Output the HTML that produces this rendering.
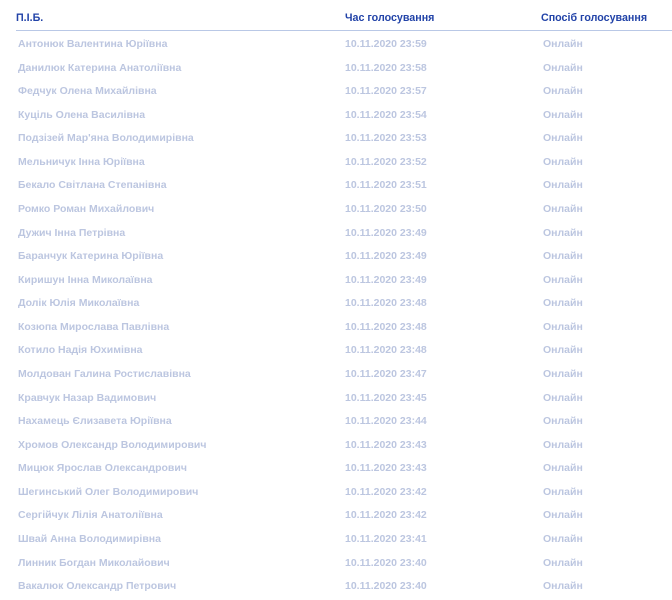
<!DOCTYPE html><html><head><meta charset="utf-8"><style>
body{margin:0;width:672px;height:600px;background:#fff;font-family:"Liberation Sans",sans-serif;font-weight:bold;font-size:10.5px;position:relative;overflow:hidden}
.h{position:absolute;top:12px;color:#2243a8;font-size:10.7px}
.line{position:absolute;left:16px;right:0;top:30px;height:1px;background:#b9c8e6}
.r{position:absolute;left:0;width:672px;height:14px;color:#bcc6e0}
.r span{position:absolute;top:0}
.a{left:18px}.b{left:345px}.c{left:543px}
</style></head><body>
<div class="h" style="left:16px">П.І.Б.</div>
<div class="h" style="left:345px">Час голосування</div>
<div class="h" style="left:541px">Спосіб голосування</div>
<div class="line"></div>
<div class="r" style="top:38px"><span class="a">Антонюк Валентина Юріївна</span><span class="b">10.11.2020 23:59</span><span class="c">Онлайн</span></div>
<div class="r" style="top:61.6px"><span class="a">Данилюк Катерина Анатоліївна</span><span class="b">10.11.2020 23:58</span><span class="c">Онлайн</span></div>
<div class="r" style="top:85.1px"><span class="a">Федчук Олена Михайлівна</span><span class="b">10.11.2020 23:57</span><span class="c">Онлайн</span></div>
<div class="r" style="top:108.7px"><span class="a">Куціль Олена Василівна</span><span class="b">10.11.2020 23:54</span><span class="c">Онлайн</span></div>
<div class="r" style="top:132.3px"><span class="a">Подзізей Мар'яна Володимирівна</span><span class="b">10.11.2020 23:53</span><span class="c">Онлайн</span></div>
<div class="r" style="top:155.8px"><span class="a">Мельничук Інна Юріївна</span><span class="b">10.11.2020 23:52</span><span class="c">Онлайн</span></div>
<div class="r" style="top:179.4px"><span class="a">Бекало Світлана Степанівна</span><span class="b">10.11.2020 23:51</span><span class="c">Онлайн</span></div>
<div class="r" style="top:203px"><span class="a">Ромко Роман Михайлович</span><span class="b">10.11.2020 23:50</span><span class="c">Онлайн</span></div>
<div class="r" style="top:226.5px"><span class="a">Дужич Інна Петрівна</span><span class="b">10.11.2020 23:49</span><span class="c">Онлайн</span></div>
<div class="r" style="top:250.1px"><span class="a">Баранчук Катерина Юріївна</span><span class="b">10.11.2020 23:49</span><span class="c">Онлайн</span></div>
<div class="r" style="top:273.7px"><span class="a">Киришун Інна Миколаївна</span><span class="b">10.11.2020 23:49</span><span class="c">Онлайн</span></div>
<div class="r" style="top:297.2px"><span class="a">Долік Юлія Миколаївна</span><span class="b">10.11.2020 23:48</span><span class="c">Онлайн</span></div>
<div class="r" style="top:320.8px"><span class="a">Козюпа Мирослава Павлівна</span><span class="b">10.11.2020 23:48</span><span class="c">Онлайн</span></div>
<div class="r" style="top:344.4px"><span class="a">Котило Надія Юхимівна</span><span class="b">10.11.2020 23:48</span><span class="c">Онлайн</span></div>
<div class="r" style="top:367.9px"><span class="a">Молдован Галина Ростиславівна</span><span class="b">10.11.2020 23:47</span><span class="c">Онлайн</span></div>
<div class="r" style="top:391.5px"><span class="a">Кравчук Назар Вадимович</span><span class="b">10.11.2020 23:45</span><span class="c">Онлайн</span></div>
<div class="r" style="top:415.1px"><span class="a">Нахамець Єлизавета Юріївна</span><span class="b">10.11.2020 23:44</span><span class="c">Онлайн</span></div>
<div class="r" style="top:438.6px"><span class="a">Хромов Олександр Володимирович</span><span class="b">10.11.2020 23:43</span><span class="c">Онлайн</span></div>
<div class="r" style="top:462.2px"><span class="a">Мицюк Ярослав Олександрович</span><span class="b">10.11.2020 23:43</span><span class="c">Онлайн</span></div>
<div class="r" style="top:485.8px"><span class="a">Шегинський Олег Володимирович</span><span class="b">10.11.2020 23:42</span><span class="c">Онлайн</span></div>
<div class="r" style="top:509.3px"><span class="a">Сергійчук Лілія Анатоліївна</span><span class="b">10.11.2020 23:42</span><span class="c">Онлайн</span></div>
<div class="r" style="top:532.9px"><span class="a">Швай Анна Володимирівна</span><span class="b">10.11.2020 23:41</span><span class="c">Онлайн</span></div>
<div class="r" style="top:556.5px"><span class="a">Линник Богдан Миколайович</span><span class="b">10.11.2020 23:40</span><span class="c">Онлайн</span></div>
<div class="r" style="top:580px"><span class="a">Вакалюк Олександр Петрович</span><span class="b">10.11.2020 23:40</span><span class="c">Онлайн</span></div>
</body></html>
